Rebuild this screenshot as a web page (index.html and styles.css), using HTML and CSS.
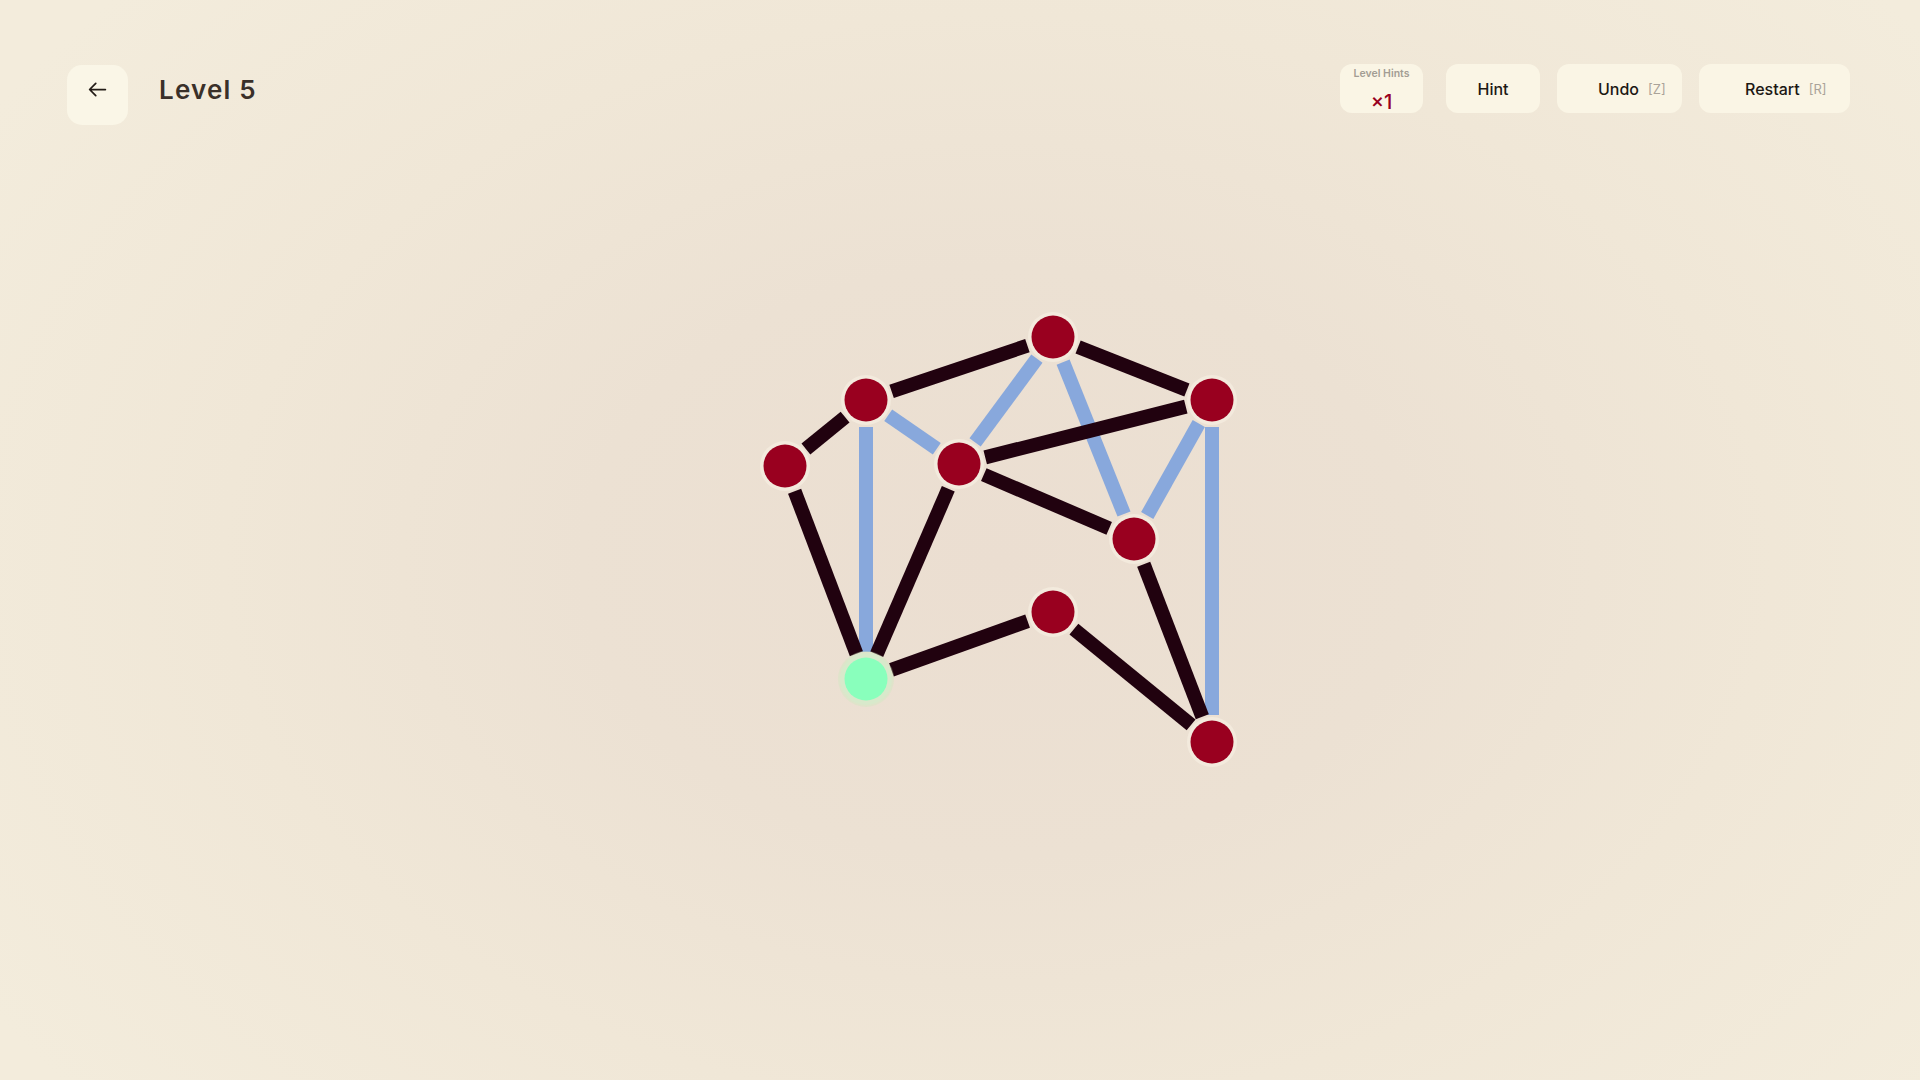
FILE: index.html
```html
<!DOCTYPE html>
<html lang="en">
<head>
<meta charset="utf-8">
<title>Level 5</title>
<link rel="stylesheet" href="styles.css">
</head>
<body>
<div class="page">
  <svg class="board" viewBox="0 0 1920 1080" width="1920" height="1080">
    <g class="edges-blue">
      <line x1="866" y1="427" x2="866" y2="652"/>
      <line x1="888.2" y1="415.3" x2="936.8" y2="448.7"/>
      <line x1="975.1" y1="442.3" x2="1036.9" y2="358.7"/>
      <line x1="1063.1" y1="362.1" x2="1124.0" y2="514.0"/>
      <line x1="1198.8" y1="423.5" x2="1147.2" y2="515.5"/>
      <line x1="1212" y1="427" x2="1212" y2="715"/>
    </g>
    <g class="edges-dark">
      <line x1="891.6" y1="391.4" x2="1027.4" y2="345.6"/>
      <line x1="1078.1" y1="347.0" x2="1186.9" y2="390.0"/>
      <line x1="805.9" y1="449.0" x2="845.1" y2="417.1"/>
      <line x1="985.2" y1="457.4" x2="1185.8" y2="406.6"/>
      <line x1="983.8" y1="474.6" x2="1109.2" y2="528.4"/>
      <line x1="794.6" y1="491.2" x2="856.4" y2="653.8"/>
      <line x1="948.3" y1="488.8" x2="876.7" y2="654.2"/>
      <line x1="891.4" y1="669.9" x2="1027.6" y2="621.1"/>
      <line x1="1073.9" y1="629.1" x2="1191.1" y2="724.9"/>
      <line x1="1143.7" y1="564.2" x2="1202.3" y2="716.8"/>
    </g>
    <g class="nodes">
      <circle class="ring" cx="1053" cy="337" r="25"/><circle class="dot" cx="1053" cy="337" r="21.5"/>
      <circle class="ring" cx="866" cy="400" r="25"/><circle class="dot" cx="866" cy="400" r="21.5"/>
      <circle class="ring" cx="785" cy="466" r="25"/><circle class="dot" cx="785" cy="466" r="21.5"/>
      <circle class="ring" cx="959" cy="464" r="25"/><circle class="dot" cx="959" cy="464" r="21.5"/>
      <circle class="ring" cx="1212" cy="400" r="25"/><circle class="dot" cx="1212" cy="400" r="21.5"/>
      <circle class="ring" cx="1134" cy="539" r="25"/><circle class="dot" cx="1134" cy="539" r="21.5"/>
      <circle class="ring" cx="1053" cy="612" r="25"/><circle class="dot" cx="1053" cy="612" r="21.5"/>
      <circle class="ring" cx="1212" cy="742" r="25"/><circle class="dot" cx="1212" cy="742" r="21.5"/>
      <circle class="glow" cx="866" cy="679" r="28"/>
      <circle class="ring-green" cx="866" cy="679" r="26"/><circle class="dot-green" cx="866" cy="679" r="21.5"/>
    </g>
  </svg>

  <header class="topbar">
    <div class="left">
      <button class="back" aria-label="Back">
        <svg viewBox="0 0 24 24" width="24" height="24"><path d="M21 12H3.5M10 5L3 12L10 19" fill="none" stroke="#231c17" stroke-width="2" stroke-linecap="round" stroke-linejoin="round"/></svg>
      </button>
      <h1 class="title">Level 5</h1>
    </div>
    <div class="right">
      <div class="hints">
        <span class="hints-label">Level Hints</span>
        <span class="hints-count">×1</span>
      </div>
      <button class="btn btn-hint">Hint</button>
      <button class="btn btn-undo">Undo<span class="key">[Z]</span></button>
      <button class="btn btn-restart">Restart<span class="key">[R]</span></button>
    </div>
  </header>
</div>
</body>
</html>
```

FILE: styles.css
```css
* { box-sizing: border-box; }
html, body {
  margin: 0;
  padding: 0;
  width: 1920px;
  height: 1080px;
  overflow: hidden;
}
body {
  font-family: "Inter", "Noto Sans", sans-serif;
  background: radial-gradient(ellipse 62% 78% at 52% 52%, #ebded1 0%, #ece1d3 35%, #f0e7d7 65%, #f3ecdc 100%);
}
.page {
  position: relative;
  width: 1920px;
  height: 1080px;
}
.board {
  position: absolute;
  left: 0;
  top: 0;
}
.edges-blue line {
  stroke: #88a8dc;
  stroke-width: 14;
}
.edges-dark line {
  stroke: #21020f;
  stroke-width: 14;
}
.ring { fill: #f3eadd; }
.dot { fill: #99001f; }
.glow { fill: rgba(200, 235, 190, 0.35); }
.ring-green { fill: #d8e9cb; }
.dot-green { fill: #89ffbc; }

.topbar {
  position: relative;
  display: flex;
  justify-content: space-between;
  align-items: flex-start;
  padding: 64px 70px 0 67px;
}
.left {
  display: flex;
  align-items: center;
  margin-top: 1px;
}
.back {
  width: 61px;
  height: 60px;
  border: none;
  border-radius: 15px;
  background: #faf6e7;
  display: flex;
  align-items: center;
  justify-content: center;
  padding: 0 0 11px 0;
  cursor: pointer;
}
.back svg { width: 21px; height: 21px; }
.title {
  margin: 0 0 11px 31px;
  font-size: 26px;
  font-weight: 600;
  letter-spacing: 1.2px;
  color: #3a3029;
}
.right {
  display: flex;
  align-items: center;
  gap: 17px;
}
.hints {
  width: 83px;
  height: 49px;
  margin-right: 6px;
  border-radius: 12px;
  background: #faf5e5;
  display: flex;
  flex-direction: column;
  align-items: center;
  padding-top: 3px;
}
.hints-label {
  font-size: 10.5px;
  font-weight: 600;
  color: #a39d94;
  line-height: 14px;
}
.hints-count {
  margin-top: 10px;
  font-size: 20px;
  font-weight: 500;
  color: #980020;
  line-height: 22px;
}
.btn {
  height: 49px;
  border: none;
  border-radius: 12px;
  background: #faf5e5;
  font-family: "Inter", "Noto Sans", sans-serif;
  font-size: 16px;
  font-weight: 500;
  color: #1c1814;
  display: flex;
  align-items: center;
  cursor: pointer;
}
.btn-hint { width: 94px; justify-content: center; padding: 0; }
.btn-undo { width: 125px; padding: 0 0 0 41px; }
.btn-restart { width: 151px; padding: 0 0 0 46px; }
.key {
  margin-left: 9px;
  font-size: 13px;
  font-weight: 400;
  color: #aaa399;
}
```
